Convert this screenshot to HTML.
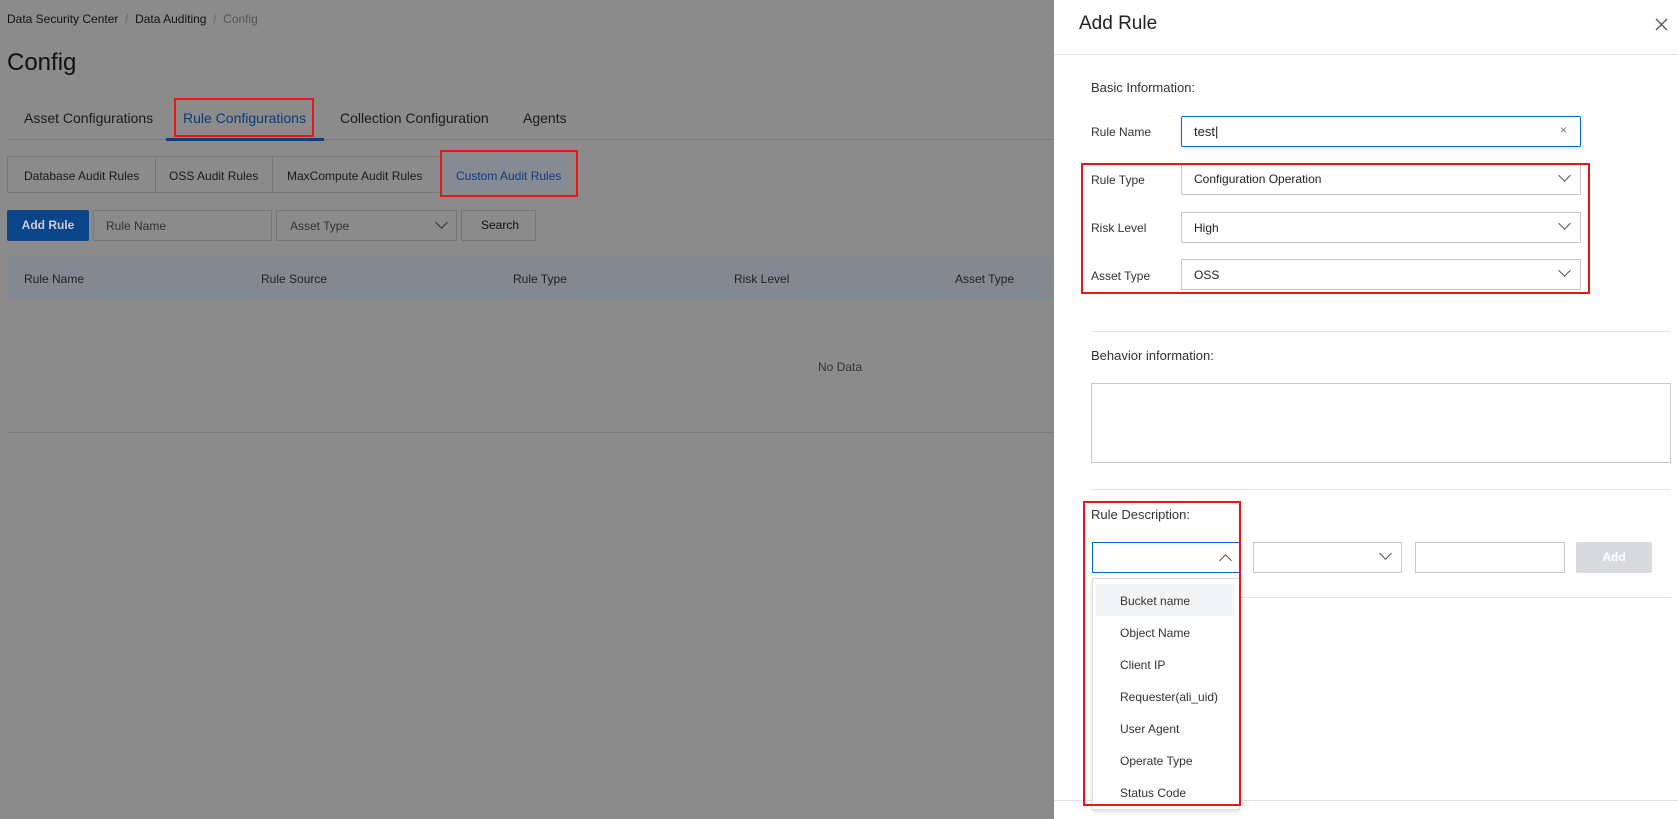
<!DOCTYPE html>
<html><head><meta charset="utf-8"><style>
*{box-sizing:border-box;margin:0;padding:0}
body{width:1678px;height:819px;overflow:hidden;position:relative;background:#8b8b8b;font-family:"Liberation Sans",sans-serif;color:#1a1a1a}
.a{position:absolute;white-space:nowrap}
.box{position:absolute;border:1px solid #767676}
.red{position:absolute;border:2px solid #e8161b}
.d{position:absolute;height:1px;background:#e3e3e3}
.chev{position:absolute;width:9px;height:9px;border-right:1.5px solid #555;border-bottom:1.5px solid #555;transform:rotate(45deg)}
</style></head><body>
<div class="a" style="left:7px;top:12px;font-size:12px;color:#111">Data Security Center <span style="color:#666">&nbsp;/&nbsp;</span> Data Auditing <span style="color:#666">&nbsp;/&nbsp;</span> <span style="color:#555">Config</span></div>
<div class="a" style="left:7px;top:49px;font-size:24px;color:#111">Config</div>
<div class="a" style="left:24px;top:110px;font-size:14px;color:#1a1a1a">Asset Configurations</div>
<div class="a" style="left:183px;top:110px;font-size:14px;color:#0d3a78">Rule Configurations</div>
<div class="a" style="left:340px;top:110px;font-size:14px">Collection Configuration</div>
<div class="a" style="left:523px;top:110px;font-size:14px">Agents</div>
<div class="a" style="left:7px;top:139px;width:1047px;height:1px;background:#7a7a7a"></div>
<div class="a" style="left:166px;top:138px;width:158px;height:3px;background:#0b3f82"></div>
<div class="red" style="left:174px;top:98px;width:140px;height:39px"></div>
<div class="box" style="left:7px;top:156px;width:560px;height:37px"></div>
<div class="a" style="left:155px;top:156px;width:1px;height:37px;background:#767676"></div>
<div class="a" style="left:272px;top:156px;width:1px;height:37px;background:#767676"></div>
<div class="a" style="left:439px;top:156px;width:128px;height:37px;background:#868a93"></div>
<div class="a" style="left:24px;top:169px;font-size:12px">Database Audit Rules</div>
<div class="a" style="left:169px;top:169px;font-size:12px">OSS Audit Rules</div>
<div class="a" style="left:287px;top:169px;font-size:12px">MaxCompute Audit Rules</div>
<div class="a" style="left:456px;top:169px;font-size:12px;color:#0d3a78">Custom Audit Rules</div>
<div class="red" style="left:440px;top:150px;width:138px;height:47px"></div>
<div class="a" style="left:7px;top:210px;width:82px;height:31px;background:#0a4489;border-radius:2px;color:#ccd;font-size:12px;font-weight:bold;line-height:31px;text-align:center">Add Rule</div>
<div class="box" style="left:93px;top:210px;width:179px;height:31px"></div>
<div class="a" style="left:106px;top:219px;font-size:12px;color:#333">Rule Name</div>
<div class="box" style="left:276px;top:210px;width:181px;height:31px"></div>
<div class="a" style="left:290px;top:219px;font-size:12px;color:#333">Asset Type</div>
<div class="chev" style="left:437px;top:218px;border-color:#333"></div>
<div class="box" style="left:461px;top:210px;width:75px;height:31px"></div>
<div class="a" style="left:481px;top:218px;font-size:12px;color:#111">Search</div>
<div class="a" style="left:7px;top:257px;width:1047px;height:43px;background:#848891"></div>
<div class="a" style="left:24px;top:272px;font-size:12px;color:#222">Rule Name</div>
<div class="a" style="left:261px;top:272px;font-size:12px;color:#222">Rule Source</div>
<div class="a" style="left:513px;top:272px;font-size:12px;color:#222">Rule Type</div>
<div class="a" style="left:734px;top:272px;font-size:12px;color:#222">Risk Level</div>
<div class="a" style="left:955px;top:272px;font-size:12px;color:#222">Asset Type</div>
<div class="a" style="left:818px;top:360px;font-size:12px;color:#333">No Data</div>
<div class="a" style="left:7px;top:432px;width:1047px;height:1px;background:#7a7a7a"></div>
<div class="a" style="left:1054px;top:0;width:624px;height:819px;background:#fff"></div>
<div class="a" style="left:1079px;top:13px;font-size:19px;color:#222">Add Rule</div>
<svg class="a" style="left:1655px;top:18px" width="13" height="13"><path d="M1 1L12 12M12 1L1 12" stroke="#555" stroke-width="1.3"/></svg>
<div class="d" style="left:1054px;top:54px;width:624px"></div>
<div class="a" style="left:1091px;top:80px;font-size:13px;color:#333">Basic Information:</div>
<div class="a" style="left:1091px;top:125px;font-size:12px;color:#333">Rule Name</div>
<div class="a" style="left:1181px;top:116px;width:400px;height:31px;border:1px solid #0a64d6;border-radius:2px;box-shadow:0 2px 4px rgba(0,0,0,.1)"></div>
<div class="a" style="left:1194px;top:124px;font-size:13px;color:#222">test|</div>
<div class="a" style="left:1560px;top:123px;font-size:12px;color:#777">×</div>
<div class="box" style="left:1181px;top:164px;width:400px;height:31px;border-color:#c8c8c8"></div>
<div class="a" style="left:1194px;top:172px;font-size:12px;color:#222">Configuration Operation</div>
<div class="chev" style="left:1560px;top:171px"></div>
<div class="a" style="left:1091px;top:173px;font-size:12px;color:#333">Rule Type</div>
<div class="box" style="left:1181px;top:212px;width:400px;height:31px;border-color:#c8c8c8"></div>
<div class="a" style="left:1194px;top:221px;font-size:12px;color:#222">High</div>
<div class="chev" style="left:1560px;top:219px"></div>
<div class="a" style="left:1091px;top:221px;font-size:12px;color:#333">Risk Level</div>
<div class="box" style="left:1181px;top:259px;width:400px;height:31px;border-color:#c8c8c8"></div>
<div class="a" style="left:1194px;top:268px;font-size:12px;color:#222">OSS</div>
<div class="chev" style="left:1560px;top:266px"></div>
<div class="a" style="left:1091px;top:269px;font-size:12px;color:#333">Asset Type</div>
<div class="red" style="left:1081px;top:163px;width:509px;height:131px"></div>
<div class="d" style="left:1091px;top:331px;width:580px"></div>
<div class="a" style="left:1091px;top:348px;font-size:13px;color:#333">Behavior information:</div>
<div class="box" style="left:1091px;top:383px;width:580px;height:80px;border-color:#c8c8c8"></div>
<div class="d" style="left:1091px;top:489px;width:580px"></div>
<div class="a" style="left:1091px;top:507px;font-size:13px;color:#333">Rule Description:</div>
<div class="a" style="left:1092px;top:542px;width:149px;height:31px;border:1px solid #0a64d6"></div>
<div class="chev" style="left:1221px;top:556px;transform:rotate(225deg)"></div>
<div class="box" style="left:1253px;top:542px;width:149px;height:31px;border-color:#c8c8c8"></div>
<div class="chev" style="left:1381px;top:549px"></div>
<div class="box" style="left:1415px;top:542px;width:150px;height:31px;border-color:#c8c8c8"></div>
<div class="a" style="left:1576px;top:542px;width:76px;height:31px;background:#d8dadd;color:#fff;font-size:12px;font-weight:bold;line-height:31px;text-align:center;border-radius:2px">Add</div>
<div class="d" style="left:1091px;top:597px;width:580px"></div>
<div class="d" style="left:1054px;top:800px;width:624px"></div>
<div class="a" style="left:1092px;top:578px;width:148px;height:232px;background:#fff;border:1px solid #ddd;box-shadow:0 2px 4px rgba(0,0,0,.12)"></div>
<div class="a" style="left:1096px;top:584px;width:138px;height:32px;background:#f4f5f7"></div>
<div class="a" style="left:1120px;top:585px;font-size:12px;color:#333;line-height:32px">Bucket name<br>Object Name<br>Client IP<br>Requester(ali_uid)<br>User Agent<br>Operate Type<br>Status Code</div>
<div class="red" style="left:1083px;top:501px;width:158px;height:305px"></div>
</body></html>
